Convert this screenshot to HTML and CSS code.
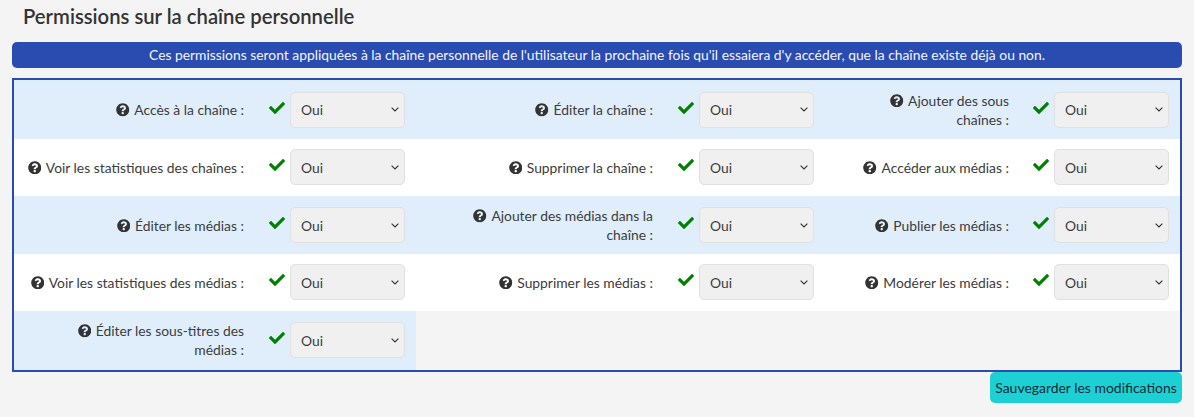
FILE: index.html
```html
<!DOCTYPE html>
<html lang="fr">
<head>
<meta charset="utf-8">
<title>Permissions sur la chaîne personnelle</title>
<link rel="stylesheet" href="styles.css">
</head>
<body>
<svg class="defs" width="0" height="0" aria-hidden="true">
  <symbol id="q" viewBox="0 0 512 512"><path d="M504 256c0 136.997-111.043 248-248 248S8 392.997 8 256C8 119.083 119.043 8 256 8s248 111.083 248 248zM262.655 90c-54.497 0-89.255 22.957-116.549 63.758-3.536 5.286-2.353 12.415 2.715 16.258l34.699 26.31c5.205 3.947 12.621 3.008 16.665-2.122 17.864-22.658 30.113-35.797 57.303-35.797 20.429 0 45.698 13.148 45.698 32.958 0 14.976-12.363 22.667-32.534 33.976C247.128 238.528 216 254.941 216 296v4c0 6.627 5.373 12 12 12h56c6.627 0 12-5.373 12-12v-1.333c0-28.462 83.186-29.647 83.186-106.667 0-58.002-60.165-102-116.531-102zM256 338c-25.365 0-46 20.635-46 46 0 25.364 20.635 46 46 46s46-20.636 46-46c0-25.365-20.635-46-46-46z"/></symbol>
  <symbol id="c" viewBox="0 0 512 512"><path d="M173.898 439.404l-166.4-166.4c-9.997-9.997-9.997-26.206 0-36.204l36.203-36.204c9.997-9.998 26.207-9.998 36.204 0L192 312.69 432.095 72.596c9.997-9.997 26.207-9.997 36.204 0l36.203 36.204c9.997 9.997 9.997 26.206 0 36.204l-294.4 294.401c-9.998 9.997-26.207 9.997-36.204-.001z"/></symbol>
</svg>
<h2 class="title">Permissions sur la chaîne personnelle</h2>
<p class="notice">Ces permissions seront appliquées à la chaîne personnelle de l'utilisateur la prochaine fois qu'il essaiera d'y accéder, que la chaîne existe déjà ou non.</p>
<div class="perms">
  <div class="row odd">
    <div class="cell c1"><label class="lbl"><svg class="q"><use href="#q"/></svg>Accès à la chaîne :</label><svg class="ok"><use href="#c"/></svg><select class="sel"><option>Oui</option><option>Non</option></select></div>
    <div class="cell c2"><label class="lbl"><svg class="q"><use href="#q"/></svg>Éditer la chaîne :</label><svg class="ok"><use href="#c"/></svg><select class="sel"><option>Oui</option><option>Non</option></select></div>
    <div class="cell c3"><label class="lbl"><svg class="q"><use href="#q"/></svg>Ajouter des sous chaînes :</label><svg class="ok"><use href="#c"/></svg><select class="sel"><option>Oui</option><option>Non</option></select></div>
  </div>
  <div class="row nudge">
    <div class="cell c1"><label class="lbl"><svg class="q"><use href="#q"/></svg>Voir les statistiques des chaînes :</label><svg class="ok"><use href="#c"/></svg><select class="sel"><option>Oui</option><option>Non</option></select></div>
    <div class="cell c2"><label class="lbl"><svg class="q"><use href="#q"/></svg>Supprimer la chaîne :</label><svg class="ok"><use href="#c"/></svg><select class="sel"><option>Oui</option><option>Non</option></select></div>
    <div class="cell c3"><label class="lbl"><svg class="q"><use href="#q"/></svg>Accéder aux médias :</label><svg class="ok"><use href="#c"/></svg><select class="sel"><option>Oui</option><option>Non</option></select></div>
  </div>
  <div class="row odd">
    <div class="cell c1"><label class="lbl"><svg class="q"><use href="#q"/></svg>Éditer les médias :</label><svg class="ok"><use href="#c"/></svg><select class="sel"><option>Oui</option><option>Non</option></select></div>
    <div class="cell c2"><label class="lbl"><svg class="q"><use href="#q"/></svg>Ajouter des médias dans la chaîne :</label><svg class="ok"><use href="#c"/></svg><select class="sel"><option>Oui</option><option>Non</option></select></div>
    <div class="cell c3"><label class="lbl"><svg class="q"><use href="#q"/></svg>Publier les médias :</label><svg class="ok"><use href="#c"/></svg><select class="sel"><option>Oui</option><option>Non</option></select></div>
  </div>
  <div class="row nudge">
    <div class="cell c1"><label class="lbl"><svg class="q"><use href="#q"/></svg>Voir les statistiques des médias :</label><svg class="ok"><use href="#c"/></svg><select class="sel"><option>Oui</option><option>Non</option></select></div>
    <div class="cell c2"><label class="lbl"><svg class="q"><use href="#q"/></svg>Supprimer les médias :</label><svg class="ok"><use href="#c"/></svg><select class="sel"><option>Oui</option><option>Non</option></select></div>
    <div class="cell c3"><label class="lbl"><svg class="q"><use href="#q"/></svg>Modérer les médias :</label><svg class="ok"><use href="#c"/></svg><select class="sel"><option>Oui</option><option>Non</option></select></div>
  </div>
  <div class="row last nudge">
    <div class="cell c1 odd"><label class="lbl narrow"><svg class="q"><use href="#q"/></svg>Éditer les sous-titres des médias :</label><svg class="ok"><use href="#c"/></svg><select class="sel"><option>Oui</option><option>Non</option></select></div>
  </div>
</div>
<div class="actions"><button class="save" type="button">Sauvegarder les modifications</button></div>
</body>
</html>
```
FILE: styles.css
```css
* { box-sizing: border-box; }
html, body { margin: 0; padding: 0; }
body {
  background: #f4f4f4;
  color: #3c3c3c;
  font-family: Lato, "Liberation Sans", sans-serif;
  font-size: 13.85px;
  line-height: 19px;
  height: 417px;
  overflow: hidden;
}
.defs { position: absolute; }
.title {
  margin: 0;
  padding: 4px 0 0 23px;
  height: 42px;
  font-size: 20.25px;
  font-weight: 600;
  line-height: 24px;
  color: #333;
}
.notice {
  margin: 0 12px;
  height: 26px;
  background: #2a4bb0;
  color: #f2f5fb;
  border-radius: 5px;
  text-align: center;
  line-height: 26px;
}
.perms {
  margin: 10px 12px 0;
  height: 294px;
  border: 2px solid #2a4bb0;
  display: grid;
  grid-template-rows: 59px 57px 58px 57px 59px;
}
.row {
  display: flex;
  background: #fff;
}
.row.odd, .cell.odd { background: #e0eefc; }
.row.last { background: transparent; }
.cell {
  display: flex;
  align-items: center;
  justify-content: flex-end;
  padding-right: 11px;
}
.nudge .cell { padding-bottom: 1px; }
.c1 { width: 402px; }
.c2 { width: 409px; }
.c3 { width: 355px; }
.lbl {
  text-align: right;
  width: 220px;
  flex: none;
}
.lbl.narrow { width: 180px; }
.c2 .lbl { width: 190px; }
.c3 .lbl { width: 155px; }
.q {
  width: 13.5px;
  height: 13.5px;
  fill: #333;
  margin-right: 4.5px;
  vertical-align: -1.5px;
}
.ok {
  width: 16px;
  height: 16px;
  fill: #008000;
  margin: -4px 5px 0 25px;
  flex: none;
}
.c3 .ok { margin-left: 24px; }
.sel {
  width: 115px;
  height: 36px;
  flex: none;
  appearance: none;
  background-color: #f0f0f0;
  background-image: url("data:image/svg+xml,%3Csvg xmlns='http://www.w3.org/2000/svg' width='8' height='5' viewBox='0 0 8 5'%3E%3Cpath d='M.6.6 4 4l3.4-3.4' fill='none' stroke='%23333' stroke-width='1.1'/%3E%3C/svg%3E");
  background-repeat: no-repeat;
  background-position: right 5px center;
  border: 1px solid #e0e0e0;
  border-radius: 5px;
  color: #3c3c3c;
  font: inherit;
  padding: 0 10px;
}
.actions {
  display: flex;
  justify-content: flex-end;
  padding-right: 12px;
}
.save {
  width: 192px;
  height: 31px;
  border: 0;
  border-radius: 5px;
  background: #1dd0d4;
  color: #0d2b3a;
  font: inherit;
  font-size: 13.94px;
  padding: 0;
}
```
